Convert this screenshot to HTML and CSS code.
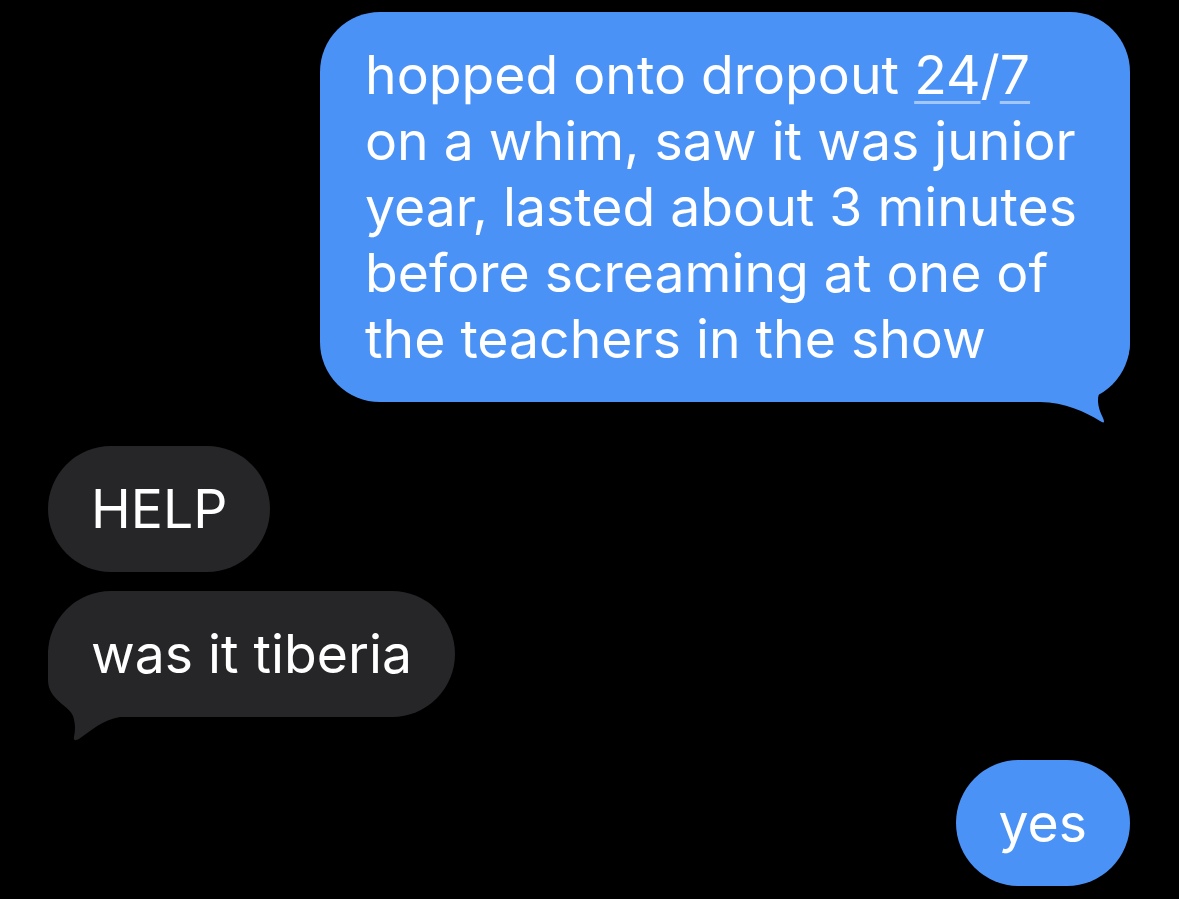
FILE: index.html
```html
<!DOCTYPE html>
<html>
<head>
<meta charset="utf-8">
<link rel="stylesheet" href="styles.css">
</head>
<body>
<div class="thread">
  <div class="bubble sent long">
    <div class="text">hopped onto dropout <span class="link">24</span>/<span class="link">7</span><br>on a whim, saw it was junior<br>year, lasted about 3 minutes<br>before screaming at one of<br>the teachers in the show</div>
    <svg class="tail tail-sent" width="90" height="86" viewBox="0 0 90 86"><path d="M0 62 C25 62 45 72 60 81 Q66 85 63 78 C57 66 56 56 62 48 C72 38 90 30 90 0 L0 0 Z"/></svg>
  </div>
  <div class="bubble recv help"><span class="text">HELP</span></div>
  <div class="bubble recv tib"><span class="text">was it tiberia</span>
    <svg class="tail tail-recv" width="90" height="95" viewBox="0 0 90 95"><path d="M8 0 L8 30 C8 50 30 56 33 66 C36 75 35 82 34 87 Q33 92 39 89 C52 80 62 70 80 67 L90 67 L90 0 Z"/></svg>
  </div>
  <div class="bubble sent yes"><span class="text">yes</span></div>
</div>
</body>
</html>
```
FILE: styles.css
```css
html, body {
  margin: 0;
  padding: 0;
  background: #000;
}
body {
  width: 1179px;
  height: 899px;
  overflow: hidden;
}
.thread {
  display: flex;
  flex-direction: column;
  padding: 12px 49px 0 48px;
  font-family: Inter, "Noto Sans", sans-serif;
  font-size: 53.5px;
  line-height: 66px;
  color: #fff;
}
.bubble {
  position: relative;
  box-sizing: border-box;
  border-radius: 63px;
  padding: 30px 43px;
}
.text {
  position: relative;
  z-index: 1;
}
.sent {
  background: #4b92f6;
  align-self: flex-end;
}
.recv {
  background: #262629;
  align-self: flex-start;
}
.long {
  width: 810px;
  padding: 30px 45px;
  border-radius: 60px;
}
.link {
  text-decoration: underline;
  text-decoration-color: #a3c6fb;
  text-decoration-thickness: 3px;
  text-underline-offset: 7px;
}
.help {
  margin-top: 44px;
}
.tib {
  margin-top: 19px;
}
.yes {
  margin-top: 43px;
}
.tail {
  position: absolute;
  z-index: 0;
}
.tail-sent {
  right: 0;
  top: 328px;
}
.tail-sent path {
  fill: #4b92f6;
}
.tail-recv {
  left: -8px;
  top: 59px;
}
.tail-recv path {
  fill: #262629;
}
```
